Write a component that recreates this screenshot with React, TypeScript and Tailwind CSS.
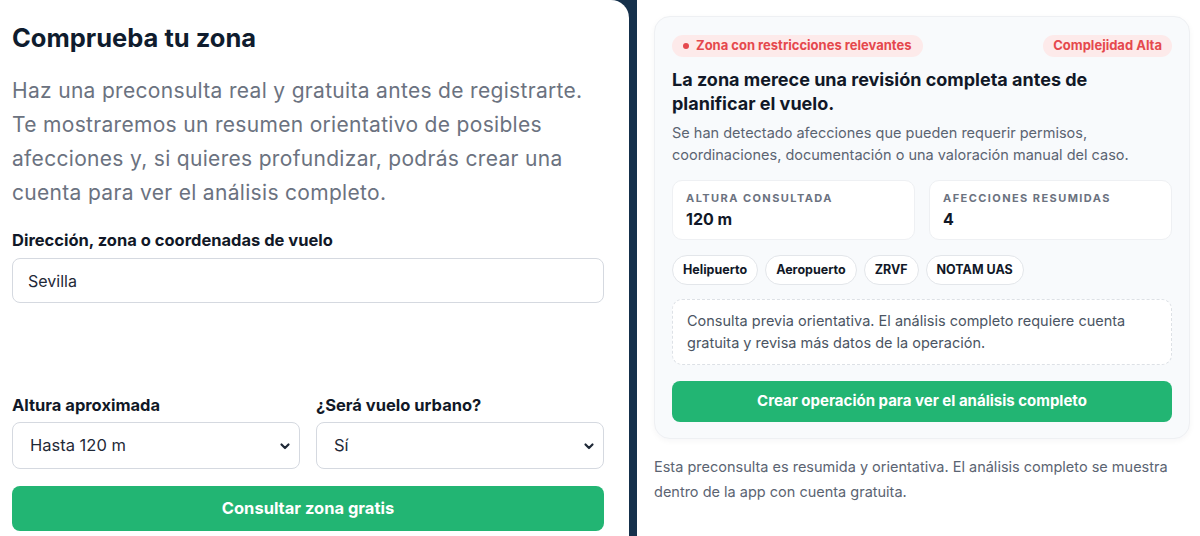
const font = { fontFamily: 'Inter, "Noto Sans", sans-serif' };

function Chevron() {
  return (
    <svg
      className="pointer-events-none absolute right-[8px] top-1/2 h-[12px] w-[12px] -translate-y-1/2 text-[#1f2937]"
      viewBox="0 0 12 12"
      fill="none"
      stroke="currentColor"
      strokeWidth="2.2"
      strokeLinecap="round"
      strokeLinejoin="round"
    >
      <path d="M2.5 4.5 6 8l3.5-3.5" />
    </svg>
  );
}

function FakeSelect({ value }: { value: string }) {
  return (
    <div className="relative h-[47px] flex-1 rounded-lg border border-[#d5d9e0] bg-white">
      <div className="flex h-full items-center pl-[17px] text-[16.5px] text-[#1f2937]">{value}</div>
      <Chevron />
    </div>
  );
}

function Stat({ label, value }: { label: string; value: string }) {
  return (
    <div className="flex-1 rounded-[10px] border border-[#eef0f3] bg-white px-[13px] pb-[10px] pt-[10px]">
      <div className="text-[11px] font-bold leading-[14px] tracking-[0.13em] text-[#6b7280]">{label}</div>
      <div className="mt-[4px] text-[16px] font-bold leading-[20px] text-[#111827]">{value}</div>
    </div>
  );
}

function Pill({ children }: { children: string }) {
  return (
    <span className="flex h-[30px] items-center rounded-full border border-[#e3e6ea] bg-white px-[10px] text-[12.5px] font-bold text-[#111827]">
      {children}
    </span>
  );
}

export default function App() {
  return (
    <div className="flex h-[536px] w-[1200px] overflow-hidden bg-[#15304b]" style={font}>
      <div className="w-[629px] rounded-tr-[18px] bg-white pl-[12px] pr-[25px]">
        <h1 className="pt-[22px] text-[25.5px] font-bold leading-[32px] text-[#0f1c2e]">Comprueba tu zona</h1>
        <p className="mt-[20px] text-[21px] leading-[34px] tracking-[0.015em] text-[#6b7280]">
          Haz una preconsulta real y gratuita antes de registrarte.
          <br />
          Te mostraremos un resumen orientativo de posibles
          <br />
          afecciones y, si quieres profundizar, podrás crear una
          <br />
          cuenta para ver el análisis completo.
        </p>
        <label className="mt-[20px] block text-[16.5px] font-bold leading-[20px] text-[#111827]">
          Dirección, zona o coordenadas de vuelo
        </label>
        <div className="mt-[8px] flex h-[45px] items-center rounded-lg border border-[#d5d9e0] bg-white pl-[15px] text-[16px] text-[#1f2937]">
          Sevilla
        </div>
        <div className="mt-[92px] flex gap-[16px]">
          <div className="flex flex-1 flex-col">
            <span className="text-[16.5px] font-bold leading-[20px] text-[#111827]">Altura aproximada</span>
            <div className="mt-[7px] flex">
              <FakeSelect value="Hasta 120 m" />
            </div>
          </div>
          <div className="flex flex-1 flex-col">
            <span className="text-[16.5px] font-bold leading-[20px] text-[#111827]">¿Será vuelo urbano?</span>
            <div className="mt-[7px] flex">
              <FakeSelect value="Sí" />
            </div>
          </div>
        </div>
        <button className="mt-[17px] flex h-[45px] w-full items-center justify-center rounded-lg bg-[#22b573] text-[16.5px] font-bold text-white">
          Consultar zona gratis
        </button>
      </div>

      <div className="ml-[8px] flex-1 bg-white pl-[17px] pr-[10px] pt-[16px]">
        <div className="rounded-2xl border border-[#eef0f3] bg-[#f8fafc] px-[17px] pb-[16px] pt-[18px] shadow-[0_2px_6px_rgba(15,23,42,0.04)]">
          <div className="flex items-center justify-between">
            <span className="flex h-[22px] items-center gap-[7px] rounded-full bg-[#fdeaea] pl-[11px] pr-[11px] text-[13px] font-bold text-[#e5484d]">
              <span className="h-[6px] w-[6px] rounded-full bg-[#e5484d]" />
              Zona con restricciones relevantes
            </span>
            <span className="flex h-[22px] items-center rounded-full bg-[#fdeaea] px-[10px] text-[13px] font-bold text-[#e5484d]">
              Complejidad Alta
            </span>
          </div>
          <h2 className="mt-[11px] text-[18px] font-bold leading-[24px] text-[#111827]">
            La zona merece una revisión completa antes de
            <br />
            planificar el vuelo.
          </h2>
          <p className="mt-[6px] text-[14.5px] leading-[22px] text-[#5b6472]">
            Se han detectado afecciones que pueden requerir permisos,
            <br />
            coordinaciones, documentación o una valoración manual del caso.
          </p>
          <div className="mt-[14px] flex gap-[14px]">
            <Stat label="ALTURA CONSULTADA" value="120 m" />
            <Stat label="AFECCIONES RESUMIDAS" value="4" />
          </div>
          <div className="mt-[15px] flex gap-[7px]">
            <Pill>Helipuerto</Pill>
            <Pill>Aeropuerto</Pill>
            <Pill>ZRVF</Pill>
            <Pill>NOTAM UAS</Pill>
          </div>
          <div className="mt-[14px] rounded-[10px] border border-dashed border-[#dde1e6] bg-white px-[14px] pb-[10px] pt-[10px] text-[14.5px] leading-[22px] text-[#4b5563]">
            Consulta previa orientativa. El análisis completo requiere cuenta
            <br />
            gratuita y revisa más datos de la operación.
          </div>
          <button className="mt-[16px] flex h-[41px] w-full items-center justify-center rounded-lg bg-[#22b573] text-[15px] font-bold text-white">
            Crear operación para ver el análisis completo
          </button>
        </div>
        <p className="mt-[15px] text-[14.5px] leading-[25px] text-[#5b6472]">
          Esta preconsulta es resumida y orientativa. El análisis completo se muestra
          <br />
          dentro de la app con cuenta gratuita.
        </p>
      </div>
    </div>
  );
}
